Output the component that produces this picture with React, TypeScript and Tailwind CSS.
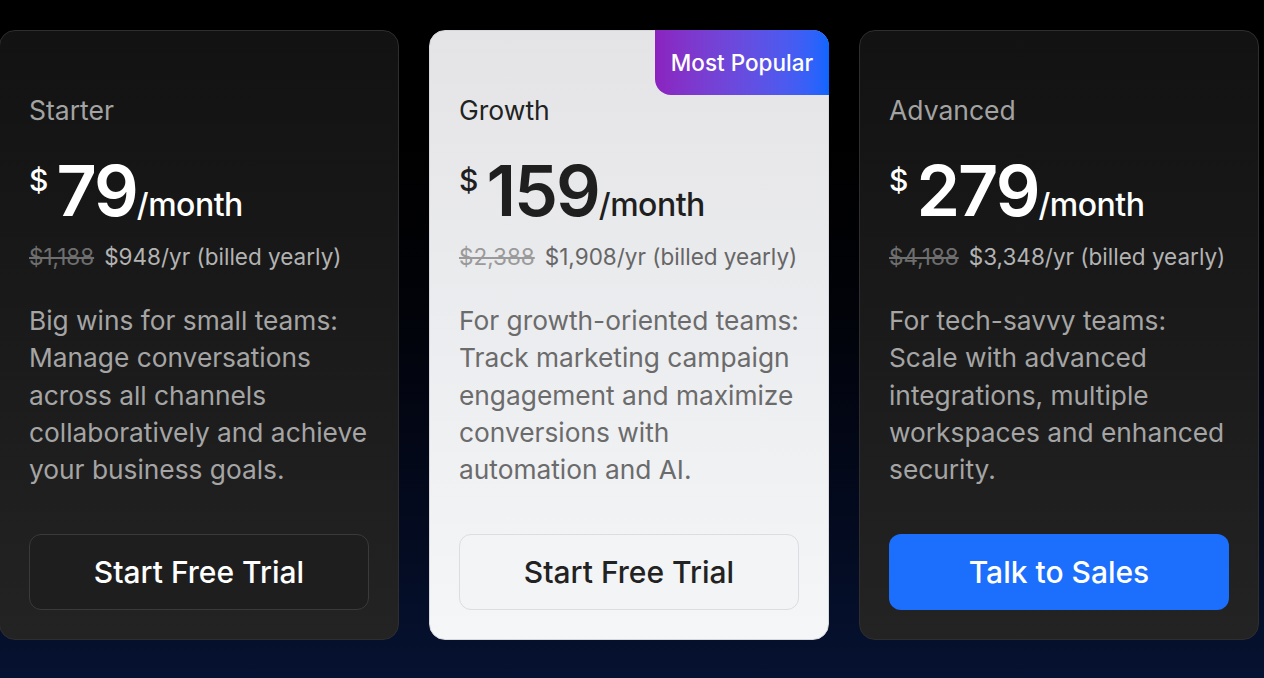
import React from "react";

type Plan = {
  name: string;
  price: string;
  was: string;
  yearly: string;
  desc: string;
  cta: string;
  featured?: boolean;
  sales?: boolean;
};

const plans: Plan[] = [
  {
    name: "Starter",
    price: "79",
    was: "$1,188",
    yearly: "$948/yr (billed yearly)",
    desc: "Big wins for small teams: Manage conversations across all channels collaboratively and achieve your business goals.",
    cta: "Start Free Trial",
  },
  {
    name: "Growth",
    price: "159",
    was: "$2,388",
    yearly: "$1,908/yr (billed yearly)",
    desc: "For growth-oriented teams: Track marketing campaign engagement and maximize conversions with automation and AI.",
    cta: "Start Free Trial",
    featured: true,
  },
  {
    name: "Advanced",
    price: "279",
    was: "$4,188",
    yearly: "$3,348/yr (billed yearly)",
    desc: "For tech-savvy teams: Scale with advanced integrations, multiple workspaces and enhanced security.",
    cta: "Talk to Sales",
    sales: true,
  },
];

const PlanCard = ({ plan }: { plan: Plan }) => {
  const light = plan.featured;
  return (
    <div
      className={`relative flex h-[610px] w-[400px] shrink-0 flex-col rounded-2xl border px-[29px] pb-[29px] pt-[63px] ${
        light
          ? "border-[#d8d8dc] bg-gradient-to-b from-[#e4e4e7] to-[#f4f6f8]"
          : "border-[#2e2e2e] bg-gradient-to-b from-[#121212] to-[#232323]"
      }`}
    >
      {/* badge */}
      {light && (
        <div className="absolute -right-px -top-px flex h-[65px] w-[174px] items-center justify-center rounded-bl-2xl rounded-tr-2xl bg-gradient-to-r from-[#8b22c0] to-[#0a66ff] text-[22.5px] font-medium text-white">
          Most Popular
        </div>
      )}

      <div className={`text-[26.5px] leading-[32px] ${light ? "text-[#222]" : "text-[#a3a3a3]"}`}>
        {plan.name}
      </div>

      <div className={`mt-[29px] flex items-start ${light ? "text-[#1f1f1f]" : "text-white"}`}>
        <span className="mr-[8px] mt-[10px] text-[30px] font-medium leading-none">$</span>
        <span className="text-[70px] font-semibold leading-[72px] tracking-[-2px]">{plan.price}</span>
        <span className="mt-[30px] text-[32px] font-medium leading-[40px] tracking-[-0.5px]">/month</span>
      </div>

      <div className="mt-[15px] flex gap-[10px] text-[22.5px] leading-[30px]">
        <span className={`line-through ${light ? "text-[#9a9a9a]" : "text-[#6e6e6e]"}`}>{plan.was}</span>
        <span className={light ? "text-[#666]" : "text-[#b3b3b3]"}>{plan.yearly}</span>
      </div>

      <p className={`mt-[30px] text-[26.3px] leading-[37.3px] ${light ? "text-[#6b6b6b]" : "text-[#a5a5a5]"}`}>
        {plan.desc}
      </p>

      <button
        className={`mt-auto flex h-[76px] w-full items-center justify-center rounded-xl text-[30px] font-medium ${
          plan.sales
            ? "bg-[#1c6efc] text-white"
            : light
            ? "border border-[#dcdde0] bg-[#f3f4f6] text-[#222]"
            : "border border-[#3a3a3a] bg-[#1e1e1e] text-white"
        }`}
      >
        {plan.cta}
      </button>
    </div>
  );
};

export default function App() {
  return (
    <div
      className="flex h-[678px] w-[1264px] overflow-hidden bg-gradient-to-b from-[#000000] via-[#02040c] to-[#061231] pt-[30px]"
      style={{ fontFamily: "Inter, 'Noto Sans', sans-serif" }}
    >
      <div className="-ml-px flex gap-[30px]">
        {plans.map((p) => (
          <PlanCard key={p.name} plan={p} />
        ))}
      </div>
    </div>
  );
}
